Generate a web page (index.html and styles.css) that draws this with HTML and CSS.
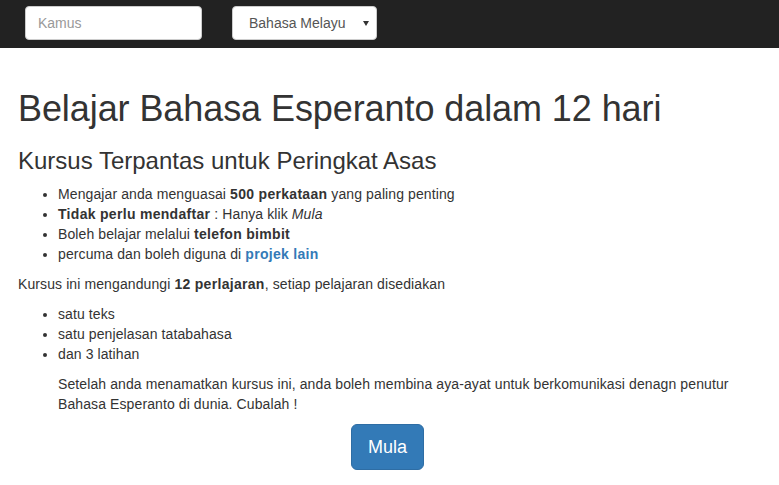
FILE: index.html
```html
<!DOCTYPE html>
<html lang="ms">
<head>
<meta charset="utf-8">
<title>Belajar Bahasa Esperanto</title>
<link rel="stylesheet" href="styles.css">
</head>
<body>
<nav class="navbar">
  <input class="field search" type="text" placeholder="Kamus">
  <div class="select-wrap">
    <select class="field lang">
      <option>Bahasa Melayu</option>
    </select>
  </div>
</nav>
<main class="container">
  <h1 class="title">Belajar Bahasa Esperanto dalam 12 hari</h1>
  <h3 class="subtitle">Kursus Terpantas untuk Peringkat Asas</h3>
  <ul class="list">
    <li>Mengajar anda menguasai <b>500 perkataan</b> yang paling penting</li>
    <li><b>Tidak perlu mendaftar</b> : Hanya klik <i>Mula</i></li>
    <li>Boleh belajar melalui <b>telefon bimbit</b></li>
    <li>percuma dan boleh diguna di <a class="link" href="#">projek lain</a></li>
  </ul>
  <p class="para">Kursus ini mengandungi <b>12 perlajaran</b>, setiap pelajaran disediakan</p>
  <ul class="list">
    <li>satu teks</li>
    <li>satu penjelasan tatabahasa</li>
    <li>dan 3 latihan</li>
  </ul>
  <p class="para indent">Setelah anda menamatkan kursus ini, anda boleh membina aya-ayat untuk berkomunikasi denagn penutur Bahasa Esperanto di dunia. Cubalah !</p>
  <div class="actions">
    <button class="btn" type="button">Mula</button>
  </div>
</main>
</body>
</html>
```
FILE: styles.css
```css
* { box-sizing: border-box; }
html, body {
  margin: 0;
  padding: 0;
  background: #fff;
  font-family: "Liberation Sans", Arial, sans-serif;
  font-size: 14px;
  line-height: 20px;
  color: #333;
}
.navbar {
  height: 48px;
  background: #222;
  display: flex;
  align-items: flex-start;
  padding: 6px 0 0 25px;
  gap: 30px;
}
.field {
  height: 34px;
  border: 1px solid #ccc;
  border-radius: 4px;
  background: #fff;
  font-family: "Liberation Sans", Arial, sans-serif;
  font-size: 14px;
  color: #555;
  padding: 6px 12px;
  outline: none;
}
.search { width: 177px; }
.search::placeholder { color: #999; }
.select-wrap { position: relative; }
.lang {
  width: 145px;
  padding-left: 16px;
  -webkit-appearance: none;
  appearance: none;
}
.select-wrap::after {
  content: "";
  position: absolute;
  right: 8px;
  top: 15px;
  border-left: 3px solid transparent;
  border-right: 3px solid transparent;
  border-top: 5px solid #333;
  pointer-events: none;
}
.container {
  padding: 41px 22px 0 18px;
  letter-spacing: 0.1px;
}
.title {
  margin: 0 0 10px;
  font-size: 36px;
  font-weight: 400;
  line-height: 1.1;
  color: #333;
  letter-spacing: -0.08px;
}
.subtitle {
  margin: 19px 0 10px;
  font-size: 24px;
  font-weight: 400;
  line-height: 1.1;
  color: #333;
  letter-spacing: 0;
}
.list {
  margin: 0 0 10px;
  padding-left: 40px;
}
.para { margin: 0 0 10px; }
.indent { padding-left: 40px; }
b { font-weight: 700; letter-spacing: 0.3px; }
.link {
  color: #337ab7;
  font-weight: 700;
  text-decoration: none;
  letter-spacing: 0.3px;
}
.actions {
  display: flex;
  justify-content: center;
}
.btn {
  background: #337ab7;
  border: 1px solid #2e6da4;
  border-radius: 6px;
  color: #fff;
  font-family: "Liberation Sans", Arial, sans-serif;
  font-size: 18px;
  line-height: 1.3333333;
  padding: 10px 16px;
  letter-spacing: 0;
  cursor: pointer;
}
```
